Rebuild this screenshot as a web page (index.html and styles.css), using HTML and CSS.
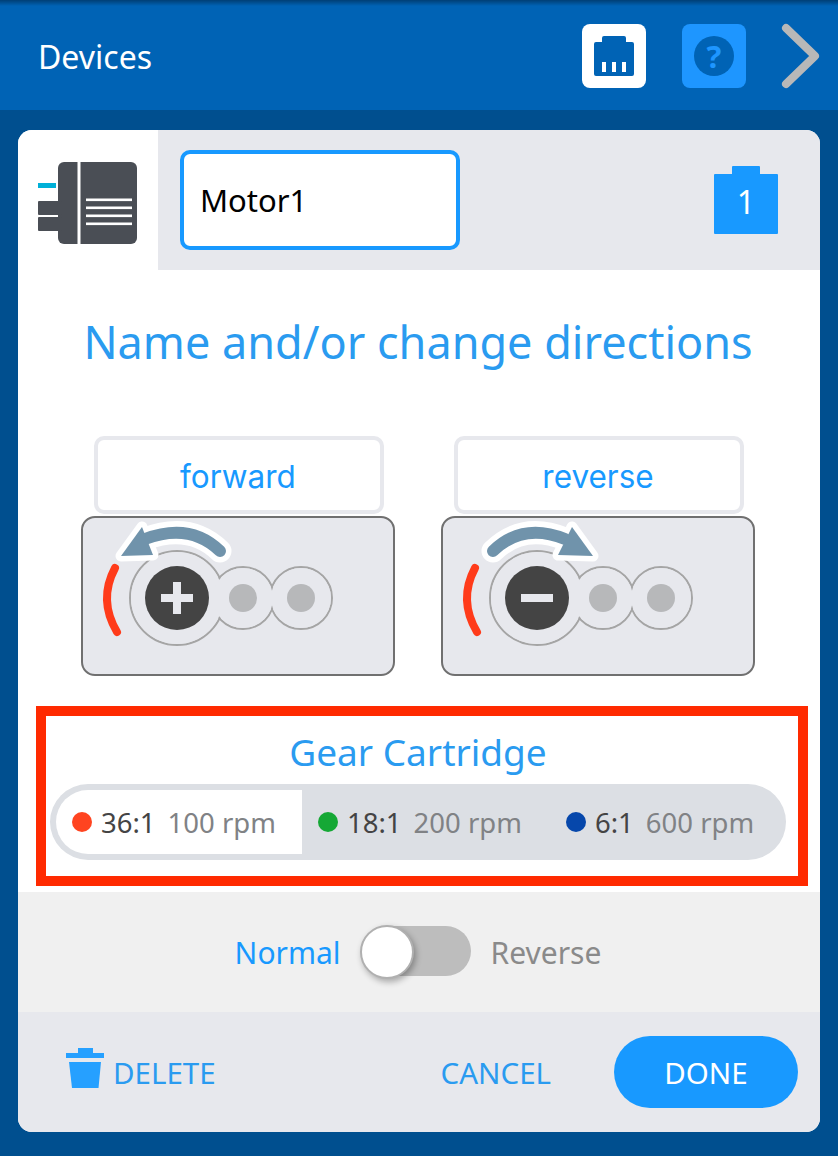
FILE: index.html
```html
<!DOCTYPE html>
<html lang="en">
<head>
    <meta charset="UTF-8">
    <meta name="viewport" content="width=device-width, initial-scale=1.0">
    <title>Devices</title>
    <link rel="stylesheet" href="styles.css">
</head>
<body>
    <header class="header">
        <h1 class="header-title">Devices</h1>
        <div class="tile tile-port">
            <svg class="tile-icon" viewBox="0 0 64 64">
                <path class="port-shape" d="M12 20a2 2 0 0 1 2-2h6v-4a2 2 0 0 1 2-2h20a2 2 0 0 1 2 2v4h6a2 2 0 0 1 2 2v30a2 2 0 0 1-2 2H14a2 2 0 0 1-2-2z"/>
                <rect class="port-pin" x="20" y="38" width="4" height="10"/>
                <rect class="port-pin" x="30" y="38" width="4" height="10"/>
                <rect class="port-pin" x="40" y="38" width="4" height="10"/>
            </svg>
        </div>
        <div class="tile tile-help">
            <span class="help-circle">?</span>
        </div>
        <svg class="chevron" viewBox="0 0 42 66">
            <path d="M5 5 L34 33 L5 61"/>
        </svg>
    </header>

    <main class="card">
        <section class="card-top">
            <div class="device-tile">
                <svg class="device-icon" viewBox="38 160 100 86">
                    <rect class="device-body" x="58" y="162" width="79" height="82" rx="6"/>
                    <rect class="device-body" x="38" y="201" width="24" height="14" rx="1"/>
                    <rect class="device-body" x="38" y="217" width="24" height="14" rx="1"/>
                    <rect class="device-cut" x="77.500" y="160" width="3" height="86"/>
                    <rect class="device-cut" x="86" y="198.500" width="46" height="2.600"/>
                    <rect class="device-cut" x="86" y="206.500" width="46" height="2.600"/>
                    <rect class="device-cut" x="86" y="214.500" width="46" height="2.600"/>
                    <rect class="device-cut" x="86" y="222.500" width="46" height="2.600"/>
                    <rect class="device-led" x="38" y="183" width="18" height="5"/>
                </svg>
            </div>
            <div class="name-row">
                <div class="name-input">Motor1</div>
                <div class="port-badge">
                    <svg class="port-badge-bg" viewBox="0 0 64 68">
                        <path d="M18 8V1a1 1 0 0 1 1-1h26a1 1 0 0 1 1 1v7h17a1 1 0 0 1 1 1v58a1 1 0 0 1-1 1H1a1 1 0 0 1-1-1V9a1 1 0 0 1 1-1z"/>
                    </svg>
                    <span class="port-badge-num">1</span>
                </div>
            </div>
        </section>

        <h2 class="section-title">Name and/or change directions</h2>

        <section class="directions">
            <div class="direction">
                <div class="direction-btn">forward</div>
                <div class="motor-box">
                    <svg class="motor-svg" viewBox="81 516 314 160">
                        <circle class="ring" cx="177" cy="598" r="47"/>
                        <circle class="ring" cx="243" cy="598" r="31"/>
                        <circle class="ring" cx="301" cy="598" r="31"/>
                        <circle class="ring-fill" cx="177" cy="598" r="46"/>
                        <circle class="ring-fill" cx="243" cy="598" r="30"/>
                        <circle class="ring-fill" cx="301" cy="598" r="30"/>
                        <circle class="pin" cx="243" cy="598" r="14"/>
                        <circle class="pin" cx="301" cy="598" r="14"/>
                        <circle class="shaft" cx="177" cy="598" r="32"/>
                        <path class="shaft-mark" d="M173 582h8v12h12v8h-12v12h-8v-12h-12v-8h12z"/>
                        <path class="red-arc" d="M115 568 Q98 600 117 632"/>
                        <path class="arrow-halo" d="M220 551 Q190 522 145 539"/>
                        <path class="arrow-head-halo" d="M121 556 L142 527 L153 555z"/>
                        <path class="arrow-line" d="M220 551 Q190 522 145 539"/>
                        <path class="arrow-head" d="M121 556 L142 527 L153 555z"/>
                    </svg>
                </div>
            </div>
            <div class="direction">
                <div class="direction-btn">reverse</div>
                <div class="motor-box">
                    <svg class="motor-svg" viewBox="441 516 314 160">
                        <circle class="ring" cx="537" cy="598" r="47"/>
                        <circle class="ring" cx="603" cy="598" r="31"/>
                        <circle class="ring" cx="661" cy="598" r="31"/>
                        <circle class="ring-fill" cx="537" cy="598" r="46"/>
                        <circle class="ring-fill" cx="603" cy="598" r="30"/>
                        <circle class="ring-fill" cx="661" cy="598" r="30"/>
                        <circle class="pin" cx="603" cy="598" r="14"/>
                        <circle class="pin" cx="661" cy="598" r="14"/>
                        <circle class="shaft" cx="537" cy="598" r="32"/>
                        <rect class="shaft-mark" x="521" y="594" width="32" height="8"/>
                        <path class="red-arc" d="M475 568 Q458 600 477 632"/>
                        <path class="arrow-halo" d="M493 551 Q523 522 565 539"/>
                        <path class="arrow-head-halo" d="M593 556 L572 527 L558 555z"/>
                        <path class="arrow-line" d="M493 551 Q523 522 565 539"/>
                        <path class="arrow-head" d="M593 556 L572 527 L558 555z"/>
                    </svg>
                </div>
            </div>
        </section>

        <section class="gear-box">
            <h3 class="gear-title">Gear Cartridge</h3>
            <div class="gear-options">
                <div class="gear-option selected">
                    <span class="dot dot-red"></span>
                    <span class="ratio">36:1</span>
                    <span class="rpm">100 rpm</span>
                </div>
                <div class="gear-option">
                    <span class="dot dot-green"></span>
                    <span class="ratio">18:1</span>
                    <span class="rpm">200 rpm</span>
                </div>
                <div class="gear-option">
                    <span class="dot dot-blue"></span>
                    <span class="ratio">6:1</span>
                    <span class="rpm">600 rpm</span>
                </div>
            </div>
        </section>

        <section class="toggle-row">
            <span class="toggle-label active">Normal</span>
            <div class="toggle">
                <div class="toggle-knob"></div>
            </div>
            <span class="toggle-label">Reverse</span>
        </section>

        <footer class="card-footer">
            <div class="delete-btn">
                <svg class="trash-icon" viewBox="0 0 38 40">
                    <path d="M12 0h15v5h11v5H0V5h12z"/>
                    <path d="M3 14h32l-2.500 26H6z"/>
                </svg>
                <span>DELETE</span>
            </div>
            <div class="cancel-btn">CANCEL</div>
            <div class="done-btn">DONE</div>
        </footer>
    </main>
</body>
</html>
```

FILE: styles.css
```css
body {
    margin: 0;
    height: 1156px;
    overflow: hidden;
    background: #004f8f;
    font-family: "Noto Sans", sans-serif;
}

/* top bar */
.header {
    display: flex;
    align-items: center;
    height: 110px;
    padding: 2px 15px 0 38px;
    box-sizing: border-box;
    background: linear-gradient(#003f75 0, #0063b5 6px);
}
.header-title {
    flex: 1;
    margin: 0;
    font-size: 32px;
    font-weight: 400;
    color: #fff;
}
.tile {
    display: flex;
    align-items: center;
    justify-content: center;
    width: 64px;
    height: 64px;
    border-radius: 8px;
}
.tile-port {
    background: #fff;
}
.tile-help {
    margin-left: 36px;
    background: #1e96ff;
}
.tile-icon {
    width: 64px;
    height: 64px;
}
.port-shape {
    fill: #0063b5;
}
.port-pin {
    fill: #fff;
}
.help-circle {
    width: 40px;
    height: 40px;
    border-radius: 50%;
    background: #0063b5;
    color: #1e96ff;
    font-size: 31px;
    font-weight: 700;
    line-height: 40px;
    text-align: center;
}
.chevron {
    width: 42px;
    height: 66px;
    margin-left: 35px;
}
.chevron path {
    fill: none;
    stroke: #b8b8b8;
    stroke-width: 8;
    stroke-linecap: round;
    stroke-linejoin: round;
}

/* card */
.card {
    margin: 20px 18px 0;
    height: 1002px;
    border-radius: 14px;
    overflow: hidden;
    background: #fff;
}
.card-top {
    display: flex;
    height: 140px;
}
.device-tile {
    display: flex;
    align-items: center;
    justify-content: center;
    width: 140px;
    background: #fff;
}
.device-icon {
    width: 100px;
    height: 86px;
    margin-top: 5px;
}
.device-body {
    fill: #4a4e55;
}
.device-cut {
    fill: #fff;
}
.device-led {
    fill: #00b0d8;
}
.name-row {
    flex: 1;
    display: flex;
    align-items: center;
    justify-content: space-between;
    padding: 0 42px 0 22px;
    background: #e7e8ed;
}
.name-input {
    width: 280px;
    height: 100px;
    box-sizing: border-box;
    padding-left: 16px;
    border: 4px solid #1899ff;
    border-radius: 10px;
    background: #fff;
    font-size: 31px;
    line-height: 92px;
    color: #000;
}
.port-badge {
    position: relative;
    width: 64px;
    height: 68px;
    font-size: 32px;
    line-height: 72px;
    text-align: center;
    color: #fff;
}
.port-badge-bg {
    position: absolute;
    top: 0;
    left: 0;
    width: 64px;
    height: 68px;
    fill: #1899ff;
}
.port-badge-num {
    position: relative;
}

/* directions */
.section-title {
    margin: 42px 0 64px;
    padding-right: 2px;
    font-size: 45px;
    font-weight: 400;
    line-height: 60px;
    text-align: center;
    color: #2a9bf0;
}
.directions {
    display: flex;
    gap: 46px;
    padding-left: 63px;
}
.direction {
    width: 314px;
}
.direction-btn {
    width: 290px;
    height: 78px;
    box-sizing: border-box;
    margin: 0 0 2px 13px;
    padding-right: 2px;
    border: 4px solid #e7e8ed;
    border-radius: 10px;
    font-family: Inter, sans-serif;
    font-size: 31.5px;
    line-height: 74px;
    text-align: center;
    color: #1899ff;
}
.motor-box {
    width: 314px;
    height: 160px;
    box-sizing: border-box;
    border: 2px solid #707070;
    border-radius: 14px;
    background: #e7e8ed;
}
.motor-svg {
    display: block;
    width: 314px;
    height: 160px;
    margin: -2px;
}
.ring {
    fill: none;
    stroke: #a5a5a5;
    stroke-width: 2;
}
.ring-fill {
    fill: #e7e8ed;
}
.pin {
    fill: #b7b8ba;
}
.shaft {
    fill: #444;
}
.shaft-mark {
    fill: #e7e8ed;
}
.red-arc {
    fill: none;
    stroke: #ff3b1a;
    stroke-width: 8;
    stroke-linecap: round;
}
.arrow-halo {
    fill: none;
    stroke: #fff;
    stroke-width: 23;
    stroke-linecap: round;
}
.arrow-head-halo {
    fill: #fff;
    stroke: #fff;
    stroke-width: 11;
    stroke-linejoin: round;
}
.arrow-line {
    fill: none;
    stroke: #7093ab;
    stroke-width: 12;
    stroke-linecap: round;
}
.arrow-head {
    fill: #7093ab;
}

/* gear cartridge */
.gear-box {
    height: 180px;
    box-sizing: border-box;
    margin: 30px 12px 6px 18px;
    padding: 14px 12px 0 4px;
    border: 10px solid #ff2a00;
}
.gear-title {
    margin: 0 0 10px;
    font-size: 37px;
    font-weight: 400;
    line-height: 44px;
    text-align: center;
    color: #2a9bf0;
}
.gear-options {
    display: grid;
    grid-template-columns: 246px 248px 1fr;
    height: 76px;
    box-sizing: border-box;
    padding: 6px;
    border-radius: 38px;
    background: #dcdfe4;
}
.gear-option {
    display: flex;
    align-items: center;
    padding-left: 16px;
    font-size: 27.5px;
}
.gear-option.selected {
    border-radius: 32px 0 0 32px;
    background: #fff;
}
.dot {
    width: 20px;
    height: 20px;
    margin-right: 9px;
    border-radius: 50%;
}
.dot-red {
    background: #ff4420;
}
.dot-green {
    background: #15a835;
}
.dot-blue {
    background: #0647ab;
}
.ratio {
    margin-right: 12px;
    color: #444;
}
.rpm {
    color: #808285;
}

/* normal / reverse switch */
.toggle-row {
    display: flex;
    align-items: center;
    justify-content: center;
    gap: 20px;
    height: 120px;
    padding: 0 2px 2px 0;
    box-sizing: border-box;
    background: #f0f0f0;
    font-size: 30px;
}
.toggle-label {
    margin-top: 2px;
    color: #8a8a8a;
}
.toggle-label.active {
    color: #1899ff;
}
.toggle {
    width: 110px;
    height: 50px;
    border-radius: 25px;
    background: #bdbdbd;
}
.toggle-knob {
    width: 50px;
    height: 50px;
    border: 2px solid #b0b0b0;
    border-radius: 50%;
    margin: -1px;
    background: #fff;
    box-shadow: 2px 3px 6px rgba(0, 0, 0, 0.3);
}

/* footer */
.card-footer {
    display: flex;
    align-items: center;
    height: 120px;
    padding: 0 22px 0 48px;
    background: #e7e8ed;
    font-size: 29.5px;
    color: #2a9bf0;
}
.delete-btn {
    display: flex;
    align-items: center;
    gap: 9px;
    margin-right: auto;
}
.trash-icon {
    width: 38px;
    height: 40px;
    margin-top: -8px;
    fill: #26a0ff;
}
.cancel-btn {
    margin-right: 63px;
}
.done-btn {
    width: 184px;
    height: 72px;
    border-radius: 36px;
    background: #1899ff;
    line-height: 74px;
    text-align: center;
    color: #fff;
}
```
